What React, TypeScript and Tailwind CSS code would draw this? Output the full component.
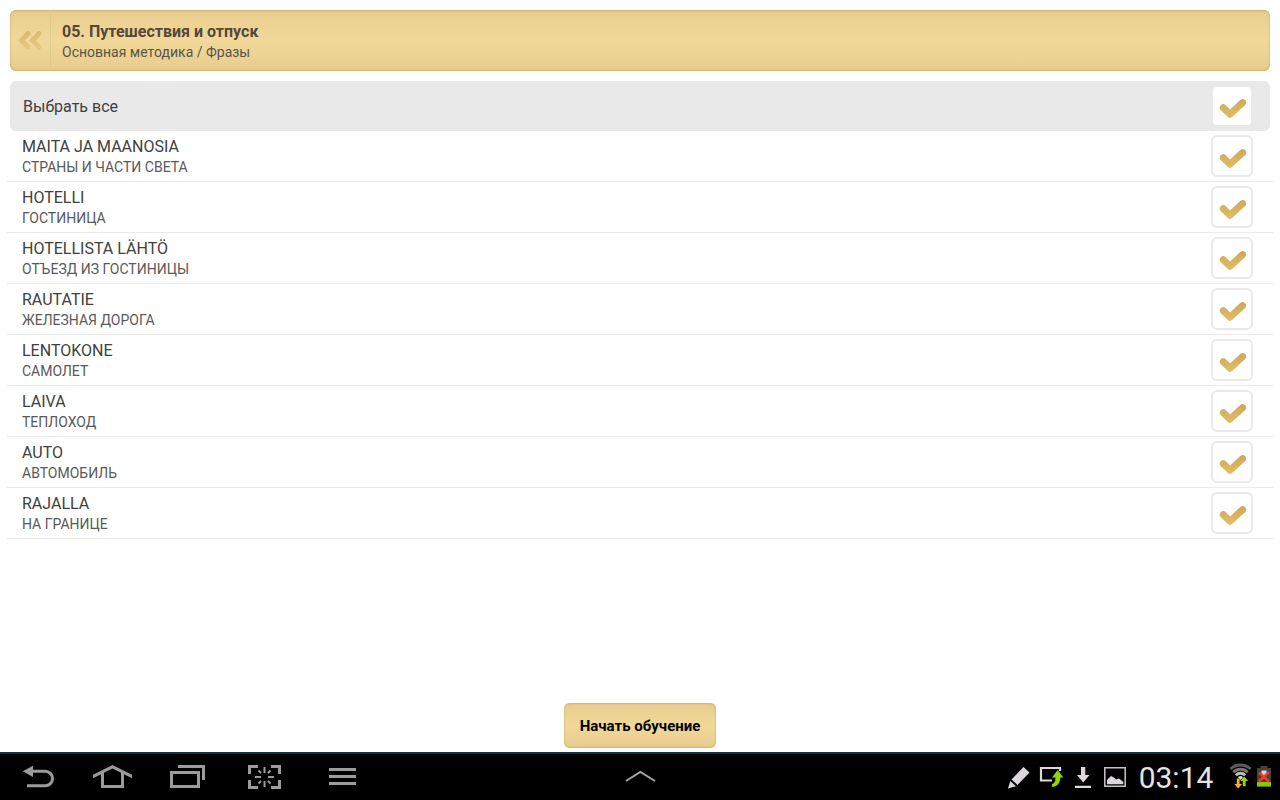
import { useState, type ReactNode } from "react";

type Topic = {
  id: string;
  title: string;
  translation: string;
};

const topics: Topic[] = [
  { id: "maita", title: "MAITA JA MAANOSIA", translation: "СТРАНЫ И ЧАСТИ СВЕТА" },
  { id: "hotelli", title: "HOTELLI", translation: "ГОСТИНИЦА" },
  { id: "lahto", title: "HOTELLISTA LÄHTÖ", translation: "ОТЪЕЗД ИЗ ГОСТИНИЦЫ" },
  { id: "rautatie", title: "RAUTATIE", translation: "ЖЕЛЕЗНАЯ ДОРОГА" },
  { id: "lentokone", title: "LENTOKONE", translation: "САМОЛЕТ" },
  { id: "laiva", title: "LAIVA", translation: "ТЕПЛОХОД" },
  { id: "auto", title: "AUTO", translation: "АВТОМОБИЛЬ" },
  { id: "rajalla", title: "RAJALLA", translation: "НА ГРАНИЦЕ" },
];

type CheckBoxProps = {
  id: string;
  checked: boolean;
  onChange: () => void;
};

function CheckBox({ id, checked, onChange }: CheckBoxProps) {
  return (
    <span className="relative block w-[42px] h-[42px] shrink-0">
      <input
        id={id}
        type="checkbox"
        checked={checked}
        onChange={onChange}
        className="peer appearance-none block w-full h-full rounded-md border-2 border-[#e9e9e9] bg-white"
      />
      <svg
        viewBox="0 0 42 42"
        className="absolute inset-0 pointer-events-none hidden peer-checked:block"
        fill="none"
        aria-hidden="true"
      >
        <defs>
          <linearGradient id={`${id}-gold`} x1="0" y1="14" x2="0" y2="34" gradientUnits="userSpaceOnUse">
            <stop offset="0" stopColor="#cda85a" />
            <stop offset="1" stopColor="#e3bf68" />
          </linearGradient>
        </defs>
        <path
          d="M12.3 22.8L19 29.3L31.6 17.6"
          stroke={`url(#${id}-gold)`}
          strokeWidth="7"
          strokeLinecap="round"
          strokeLinejoin="round"
        />
      </svg>
    </span>
  );
}

type NavButtonProps = {
  label: string;
  children: ReactNode;
};

function NavButton({ label, children }: NavButtonProps) {
  return (
    <button aria-label={label} className="w-19 h-full">
      <svg viewBox="0 0 76 46" className="w-full h-full" fill="none" stroke="#9b9b9b" strokeWidth="3">
        {children}
      </svg>
    </button>
  );
}

function StatusIcon({ children }: { children: ReactNode }) {
  return (
    <svg viewBox="0 0 32 46" className="w-8 h-full" fill="none" aria-hidden="true">
      {children}
    </svg>
  );
}

function SystemBar() {
  return (
    <nav className="h-12 bg-black border-t-2 border-[#0b3443] grid grid-cols-[1fr_auto_1fr]">
      <div className="flex h-full">
        <NavButton label="Назад">
          <path d="M31 17.3H45.3a7.2 7.2 0 0 1 0 14.4H27" />
          <path d="M22.7 17.3L33 11.7V22.9Z" fill="#9b9b9b" stroke="none" />
        </NavButton>
        <NavButton label="Домой">
          <path d="M17 24.3V20.8L36.5 11L56 20.8V24.3L36.5 14.6Z" fill="#9b9b9b" stroke="none" />
          <path d="M26.5 18.5V32.5H46.5V18.5" />
        </NavButton>
        <NavButton label="Недавние приложения">
          <path d="M19.5 18.5H46.5V32.5H19.5Z" />
          <path d="M26 12.5H51.5V26" />
        </NavButton>
        <NavButton label="Снимок экрана">
          <path d="M21.5 20V12.5H30M43 12.5H51.5V20M51.5 26V33.5H43M30 33.5H21.5V26" />
          <path
            d="M36.5 13V19M36.5 27V33M27 23H33M40 23H46M30.5 16.5L33 19M42.5 16.5L40 19M30.5 29.5L33 27M42.5 29.5L40 27"
            strokeWidth="2"
          />
        </NavButton>
        <NavButton label="Меню">
          <path d="M25 15.5H52M25 22.5H52M25 29.5H52" />
        </NavButton>
      </div>

      <button aria-label="Развернуть" className="h-full">
        <svg viewBox="0 0 32 46" className="w-8 h-full" fill="none">
          <path d="M2 27L16.3 18L31 27" stroke="#a5a5a5" strokeWidth="2" />
        </svg>
      </button>

      <div className="flex h-full justify-end items-center pr-2">
        <StatusIcon>
          <path d="M19.5 13L25.5 18.5L13.5 31L7.5 25.5Z" fill="#dcd8dc" />
          <path d="M6.3 27L12 32.2L4 34.5Z" fill="#dcd8dc" />
        </StatusIcon>
        <StatusIcon>
          <path d="M16 26.5H5V14H24V17" stroke="#dcd8dc" strokeWidth="2.2" />
          <path
            d="M21.7 16L27.3 23.5H24.3C24.3 29 21.5 32.5 16 33V30C18.5 29.5 19.5 27.5 19.5 23.5H16Z"
            fill="#93d500"
          />
        </StatusIcon>
        <StatusIcon>
          <path d="M13 13H17.3V21H21.5L15.2 28.5L9 21H13ZM7 31.7H23V34H7Z" fill="#dcd8dc" />
        </StatusIcon>
        <StatusIcon>
          <path d="M4.8 13.8H25.2V32.2H4.8Z" stroke="#c9c5c9" strokeWidth="1.5" />
          <path d="M7 30.3V26L11 22L14 23.5L16 25.5L19 24.5L23.3 28V30.3Z" fill="#dcd8dc" />
        </StatusIcon>
        <time className="w-23 pr-1 pt-px text-center text-[30px] leading-none text-[#e4e4e4]">03:14</time>
        <StatusIcon>
          <g strokeWidth="2.8">
            <path d="M6.5 15A14.5 14.5 0 0 1 26.5 15" stroke="#5c5c5c" />
            <path d="M9.2 18.2A10.5 10.5 0 0 1 23.8 18.2" stroke="#767676" />
            <path d="M11.8 21.2A6.6 6.6 0 0 1 21.2 21.2" stroke="#bdbdbd" />
          </g>
          <path d="M14 23.2A3.3 3.3 0 0 1 19 23.2L16.5 26Z" fill="#d8d8d8" />
          <path d="M12.8 24.5H15.6V30H18L14.2 34.5L10.4 30H12.8Z" fill="#ffa940" />
          <path d="M20.2 22.5L24.2 27H21.6V32.3H18.8V27H16.2Z" fill="#9bd400" />
        </StatusIcon>
        <svg viewBox="0 0 16 46" className="w-4 h-full" fill="none" aria-label="Батарея" role="img">
          <path d="M1 14H4.5V12H11.5V14H15V32.5H1Z" fill="#424242" />
          <path d="M1 28H15V32.5H1Z" fill="#8fc400" />
          <path d="M5.5 16.5H10.5V21H5.5Z" fill="#d9d9d9" />
          <path d="M3 18.5L13 27.5M13 18L3 27.5" stroke="#f03a22" strokeWidth="2.6" />
        </svg>
      </div>
    </nav>
  );
}

export default function App() {
  const [selected, setSelected] = useState<string[]>(topics.map((t) => t.id));
  const allSelected = selected.length === topics.length;

  const toggle = (id: string) =>
    setSelected((prev) => (prev.includes(id) ? prev.filter((s) => s !== id) : [...prev, id]));

  return (
    <div className="min-h-screen flex flex-col bg-white font-[Roboto,sans-serif] text-[#404040]">
      <header className="mx-2.5 mt-2.5 h-[61px] flex rounded-md overflow-hidden bg-linear-to-b from-[#e8cd8e] via-[#f1d899] to-[#e7cc8e] shadow-[inset_0_1px_2px_#cfb173,inset_0_-1px_2px_#d3b676]">
        <button
          aria-label="Назад"
          className="w-[41px] flex items-center justify-center border-r border-[#e2c888]"
        >
          <svg viewBox="0 0 24 20" className="w-6 h-5" fill="none" aria-hidden="true">
            <defs>
              <linearGradient id="back-gold" x1="0" y1="0" x2="0" y2="20" gradientUnits="userSpaceOnUse">
                <stop offset="0" stopColor="#d9b96f" />
                <stop offset="1" stopColor="#e8cb80" />
              </linearGradient>
            </defs>
            <path
              d="M10 2.5L3.5 9.5L10 16M21 2.5L14.5 9.5L21 16"
              stroke="url(#back-gold)"
              strokeWidth="5"
              strokeLinecap="round"
            />
          </svg>
        </button>
        <div className="flex flex-col justify-center pl-[11px] pt-0.5">
          <h1 className="text-base leading-5 font-bold text-[#54473c]">05. Путешествия и отпуск</h1>
          <p className="text-sm leading-5 text-[#5b5449]">Основная методика / Фразы</p>
        </div>
      </header>

      <main className="flex-1 flex flex-col pt-2.5">
        <div className="mx-2.5 h-[50px] pl-[13px] pr-[17px] flex items-center justify-between rounded-md bg-[#e9e9e9]">
          <label htmlFor="select-all" className="flex-1 pt-0.5 text-base">
            Выбрать все
          </label>
          <CheckBox
            id="select-all"
            checked={allSelected}
            onChange={() => setSelected(allSelected ? [] : topics.map((t) => t.id))}
          />
        </div>

        <ul>
          {topics.map((topic) => (
            <li
              key={topic.id}
              className="mx-[7px] h-[51px] pl-[15px] pr-5 flex items-center justify-between border-b border-[#ebebeb]"
            >
              <label htmlFor={topic.id} className="flex-1 pt-0.5">
                <span className="block text-base leading-5">{topic.title}</span>
                <span className="block text-sm leading-5 text-[#595959]">{topic.translation}</span>
              </label>
              <CheckBox
                id={topic.id}
                checked={selected.includes(topic.id)}
                onChange={() => toggle(topic.id)}
              />
            </li>
          ))}
        </ul>

        <div className="mt-auto pb-1 flex justify-center">
          <button className="h-[45px] px-4 pt-0.5 rounded-md text-[15px] font-bold text-black bg-linear-to-b from-[#e8cd8e] via-[#f1d899] to-[#e7cc8e] shadow-[inset_0_1px_2px_#cfb173,inset_0_-1px_2px_#d3b676]">
            Начать обучение
          </button>
        </div>
      </main>

      <SystemBar />
    </div>
  );
}
